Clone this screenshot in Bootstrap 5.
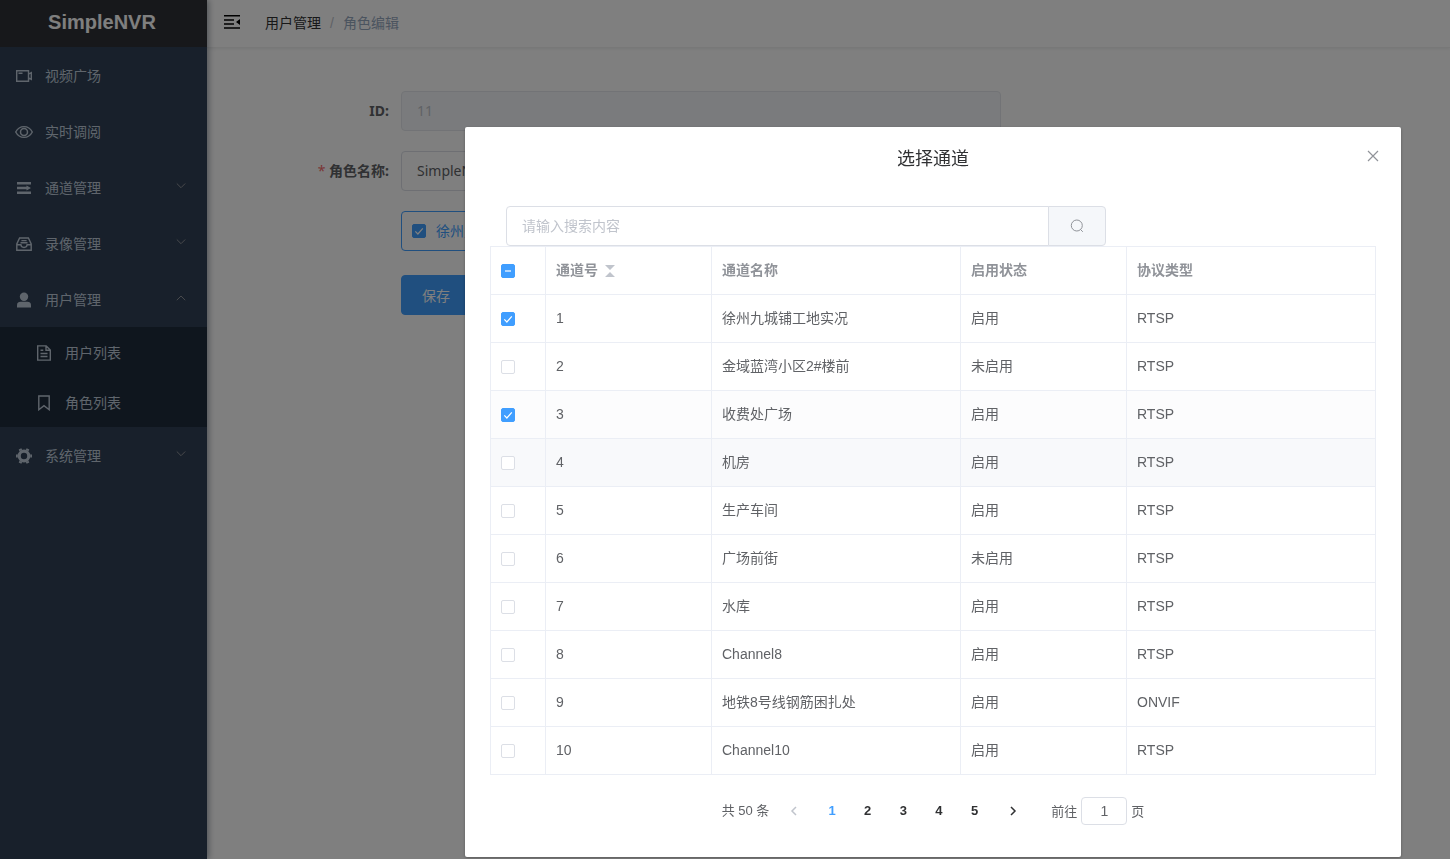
<!DOCTYPE html>
<html lang="zh-CN">
<head>
<meta charset="utf-8">
<meta name="viewport" content="width=device-width, initial-scale=1">
<title>SimpleNVR</title>
<link href="https://cdn.jsdelivr.net/npm/bootstrap@5.3.0/dist/css/bootstrap.min.css" rel="stylesheet">
<style>
:root{--ui:"Liberation Sans","Noto Sans CJK SC",sans-serif;--form:"Noto Sans","Noto Sans CJK SC",sans-serif;--blue:#409eff;--line:#ebeef5;--edge:#dcdfe6}
body{font-family:var(--ui);font-size:14px;line-height:20px;color:#606266;background:#fff}
svg{display:block;flex:none}
.ico{fill:none;stroke:currentColor}
/* sidebar */
.side{width:207px;background:#304156;box-shadow:2px 0 6px rgba(0,21,41,.35);z-index:2}
.brand{height:47px;background:#2f3036;color:#fff;font-size:20px;font-weight:700;line-height:24px;padding-bottom:4px;padding-right:3px}
.side a{color:#bfcbd9;text-decoration:none;display:flex;align-items:center}
.menu-item{height:56px;padding:2px 21px 0 16px;gap:13px}
.menu-item .chev{margin-left:auto;margin-bottom:4px;color:#909399}
.submenu{background:#1f2d3d}
.submenu a{height:50px;padding:2px 20px 0 36px;gap:13px}
/* header */
.top{height:48px;padding-left:16px;border-bottom:1px solid #f0f0f0;box-shadow:0 1px 3px rgba(0,21,41,.08)}
.fold{border:0;background:none;padding:0;color:#000;margin-bottom:4px}
.breadcrumb{--bs-breadcrumb-item-padding-x:9px;--bs-breadcrumb-divider-color:#c0c4cc;padding-bottom:2px}
.breadcrumb a{color:#303133;text-decoration:none}
.breadcrumb-item.active{color:#97a8be}
/* role form */
.role-form{padding:43px 20px 0 0;font-family:var(--form)}
.f-row{display:flex;align-items:center;margin-bottom:20px}
.f-label{width:194px;padding-right:12px;text-align:right;font-weight:700;flex:none}
.f-label .req{color:#f56c6c;font-weight:400}
.f-field{width:600px;max-width:100%}
.form-control{height:40px;font-size:14px;padding:0 15px 1px;border-color:var(--edge);color:#606266;border-radius:4px}
.form-control:disabled{background:#f5f7fa;border-color:#e4e7ed;color:#c0c4cc}
.form-control::placeholder{color:#c0c4cc}
.picked{height:40px;border:1px solid var(--blue);border-radius:4px;padding:0 20px 0 10px;color:var(--blue);gap:10px}
.btn-save{--bs-btn-bg:#409eff;--bs-btn-border-color:#409eff;--bs-btn-color:#fff;height:40px;padding:0 20px;font-size:14px;border-radius:4px;font-family:var(--form)}
/* tick boxes */
.form-check-input{width:14px;height:14px;margin:0;display:block;border:1px solid var(--edge);border-radius:2px!important;background-color:#fff;flex:none}
.form-check-input:checked,.form-check-input.partial{background-color:var(--blue);border-color:var(--blue);background-size:12px 12px}
.form-check-input:checked{background-image:url("data:image/svg+xml,%3Csvg xmlns='http://www.w3.org/2000/svg' viewBox='0 0 12 12'%3E%3Cpath d='M2.3 6.4 4.9 9 9.8 3.3' fill='none' stroke='%23fff' stroke-width='1.2'/%3E%3C/svg%3E")}
.form-check-input.partial{background-image:url("data:image/svg+xml,%3Csvg xmlns='http://www.w3.org/2000/svg' viewBox='0 0 12 12'%3E%3Cpath d='M3 6H9' stroke='%23b3d8ff' stroke-width='2'/%3E%3C/svg%3E")}
/* dialog */
.modal-backdrop{--bs-backdrop-opacity:.5}
.modal{padding:0 0 0 416px}
.modal-dialog{max-width:936px;margin:127px auto 2px}
.modal-content{border:0;border-radius:2px;box-shadow:0 1px 3px rgba(0,0,0,.3);color:#606266}
.modal-header{border:0;padding:20px 0 0;justify-content:center;position:relative}
.modal-title{font-size:18px;line-height:24px;color:#303133;font-weight:400}
.x-close{position:absolute;top:21px;right:20px;border:0;background:none;padding:0;color:#909399}
.modal-body{padding:35px 25px 32px}
.search{width:600px;max-width:100%;margin-left:16px}
.search .btn{width:58px;background:#f5f7fa;border:1px solid var(--edge);color:#909399;display:flex;align-items:center;justify-content:center;border-radius:4px}
.channels{table-layout:fixed;margin:0;border-color:var(--line);color:#606266;--bs-table-color:#606266;--bs-table-bg:transparent}
.channels th,.channels td{height:48px;padding:0 10px 2px;vertical-align:middle;border:1px solid var(--line)}
.channels th:first-child,.channels td:first-child{padding-bottom:0}
.channels th{color:#909399;font-weight:700}
.channels .sort{margin:2px 0 0 7px}
.channels tr.fade-row td{background:#fcfcfd}
.channels tr.over-row td{background:#f8f9fb}
.pager{margin-top:22px;font-size:13px;line-height:28px;height:28px}
.pager button{border:0;background:none;width:35px;height:28px;padding:0;color:#303133}
.pager .prev{margin-left:10px;padding-left:10px;color:#c0c4cc}
.pager .next{padding-left:16px}
.pages{width:178px;display:flex;list-style:none;margin:0;padding:0;font-weight:700}
.pages li{flex:1;text-align:center}
.pages a{display:block;color:#303133;text-decoration:none}
.pages a.on{color:var(--blue)}
.jump{margin-left:24px;line-height:30px}
.jump input{width:46px;height:28px;padding:0 3px;margin:0 4px;text-align:center}
</style>
</head>
<body class="overflow-hidden">
<div class="d-flex min-vh-100">
  <nav class="side flex-shrink-0 position-relative">
    <div class="brand d-flex align-items-center justify-content-center">SimpleNVR</div>
    <a class="menu-item" href="#"><svg class="ico" width="16" height="16" viewBox="0 0 16 16"><path d="M.7 2.700h11.800v10.600H.7zM2.500 5.200h4M12.500 6.200l2.800-1.600v6.800l-2.800-1.600" stroke-width="1.400"/></svg>视频广场</a>
    <a class="menu-item" href="#"><svg class="ico mx-n1" width="16" height="16" viewBox="1 0 16 16" overflow="visible"><path d="M.7 8C4.500.8 13.500.8 17.300 8 13.500 15.200 4.500 15.200.7 8z" stroke-width="1.400"/><circle cx="9" cy="8" r="3.500" stroke-width="1.500"/></svg>实时调阅</a>
    <a class="menu-item" href="#"><svg width="16" height="16" viewBox="0 0 16 16" fill="currentColor"><path d="M1 2h14v2.600H1zM1 11.400h14V14H1zM1 6.700h9.500V5.400L15 8l-4.500 2.600V9.300H1z"/></svg>通道管理<svg class="ico chev" width="10" height="10" viewBox="0 0 10 10"><path d="m.8 2.500 4.200 4.200 4.200-4.200"/></svg></a>
    <a class="menu-item" href="#"><svg class="ico" width="16" height="16" viewBox="0 0 16 16" stroke-width="1.400"><path d="M.8 14.300V8L3.600 2h8.800l2.800 6v6.300zM.8 8.800h4.100c.3 3.500 5.900 3.500 6.200 0h4.100M5.400 4.600h5.200M4.500 6.800h7"/></svg>录像管理<svg class="ico chev" width="10" height="10" viewBox="0 0 10 10"><path d="m.8 2.500 4.200 4.200 4.200-4.200"/></svg></a>
    <a class="menu-item" href="#"><svg width="16" height="16" viewBox="0 0 16 16" fill="currentColor"><circle cx="8" cy="4.800" r="4.200"/><path d="M1 15.400v-2.200C1 10.800 2.600 9.800 4.600 9.800h6.800c2 0 3.600 1 3.600 3.400v2.200z"/></svg>用户管理<svg class="ico chev" width="10" height="10" viewBox="0 0 10 10"><path d="M.8 7.200 5 3l4.200 4.200"/></svg></a>
    <div class="submenu">
      <a href="#"><svg class="ico" width="16" height="16" viewBox="0 0 16 16" stroke-width="1.400"><path d="M1.700.9h8.500l4.100 4.200v10H1.700zM10 1v4.300h4.200M4.500 5.300h2.800M4.500 8.500h7M4.500 11.500h7"/></svg>用户列表</a>
      <a href="#"><svg class="ico" width="16" height="16" viewBox="0 0 16 16" stroke-width="1.400"><path d="M2.800 1h10.400v13.700L8 10.700l-5.200 4z"/></svg>角色列表</a>
    </div>
    <a class="menu-item" href="#"><svg width="16" height="16" viewBox="0 0 16 16" fill="none" stroke="currentColor"><circle cx="8" cy="8" r="4.800" stroke-width="3.200"/><path d="M4.900 2.600 4 .9M11.100 2.600l.9-1.700M4.900 13.400 4 15.100M11.100 13.400l.9 1.700M1.800 8H0M14.200 8H16" stroke-width="3"/></svg>系统管理<svg class="ico chev" width="10" height="10" viewBox="0 0 10 10"><path d="m.8 2.500 4.200 4.200 4.200-4.200"/></svg></a>
  </nav>
  <main class="flex-grow-1">
    <header class="top d-flex align-items-center">
      <button class="fold" type="button" aria-label="折叠菜单"><svg width="18" height="16" viewBox="0 0 18 16" fill="currentColor"><path d="M1 1h16v1.600H1zM1 5.200h10v1.500H1zM1 9.200h10v1.500H1zM1 13.200h16v1.500H1zM17 5v6l-4-3z"/></svg></button>
      <ol class="breadcrumb mb-0 ms-4">
        <li class="breadcrumb-item"><a href="#">用户管理</a></li>
        <li class="breadcrumb-item active">角色编辑</li>
      </ol>
    </header>
    <form class="role-form">
      <div class="f-row"><label class="f-label" for="rid">ID:</label><div class="f-field"><input class="form-control" id="rid" value="11" disabled></div></div>
      <div class="f-row"><label class="f-label" for="rname"><span class="req">*</span> 角色名称:</label><div class="f-field"><input class="form-control" id="rname" value="SimpleNVR"></div></div>
      <div class="f-row mb-4"><span class="f-label"></span><label class="picked d-inline-flex align-items-center"><input class="form-check-input" type="checkbox" checked>徐州九城铺工地实况</label></div>
      <div class="f-row"><span class="f-label"></span><button class="btn btn-save" type="button">保存</button></div>
    </form>
  </main>
</div>

<div class="modal-backdrop show"></div>
<div class="modal d-block" role="dialog" aria-labelledby="dlg">
  <div class="modal-dialog">
    <div class="modal-content">
      <div class="modal-header">
        <h5 class="modal-title" id="dlg">选择通道</h5>
        <button class="x-close" type="button" aria-label="关闭"><svg class="ico" width="16" height="16" viewBox="0 0 16 16"><path d="m3 3 10 10M13 3 3 13" stroke-width="1.200"/></svg></button>
      </div>
      <div class="modal-body">
        <div class="input-group search">
          <input class="form-control" placeholder="请输入搜索内容" aria-label="搜索">
          <button class="btn" type="button" aria-label="搜索"><svg class="ico" width="16" height="16" viewBox="0 0 16 16"><circle cx="7.800" cy="7.500" r="5.500"/><path d="m11.500 11.500 2.300 2.300"/></svg></button>
        </div>
        <table class="table channels">
          <colgroup><col style="width:55px"><col style="width:166px"><col style="width:249px"><col style="width:166px"><col></colgroup>
          <thead><tr><th><input class="form-check-input partial" type="checkbox" aria-label="全选"></th><th><span class="d-flex align-items-center">通道号<svg class="sort" width="10" height="14" viewBox="0 0 10 14" fill="#c0c4cc"><path d="M0 1h10L5 6zM0 13h10L5 8z"/></svg></span></th><th>通道名称</th><th>启用状态</th><th>协议类型</th></tr></thead>
          <tbody>
            <tr><td><input class="form-check-input" type="checkbox" aria-label="1" checked></td><td>1</td><td>徐州九城铺工地实况</td><td>启用</td><td>RTSP</td></tr>
            <tr><td><input class="form-check-input" type="checkbox" aria-label="2"></td><td>2</td><td>金域蓝湾小区2#楼前</td><td>未启用</td><td>RTSP</td></tr>
            <tr class="fade-row"><td><input class="form-check-input" type="checkbox" aria-label="3" checked></td><td>3</td><td>收费处广场</td><td>启用</td><td>RTSP</td></tr>
            <tr class="over-row"><td><input class="form-check-input" type="checkbox" aria-label="4"></td><td>4</td><td>机房</td><td>启用</td><td>RTSP</td></tr>
            <tr><td><input class="form-check-input" type="checkbox" aria-label="5"></td><td>5</td><td>生产车间</td><td>启用</td><td>RTSP</td></tr>
            <tr><td><input class="form-check-input" type="checkbox" aria-label="6"></td><td>6</td><td>广场前街</td><td>未启用</td><td>RTSP</td></tr>
            <tr><td><input class="form-check-input" type="checkbox" aria-label="7"></td><td>7</td><td>水库</td><td>启用</td><td>RTSP</td></tr>
            <tr><td><input class="form-check-input" type="checkbox" aria-label="8"></td><td>8</td><td>Channel8</td><td>启用</td><td>RTSP</td></tr>
            <tr><td><input class="form-check-input" type="checkbox" aria-label="9"></td><td>9</td><td>地铁8号线钢筋困扎处</td><td>启用</td><td>ONVIF</td></tr>
            <tr><td><input class="form-check-input" type="checkbox" aria-label="10"></td><td>10</td><td>Channel10</td><td>启用</td><td>RTSP</td></tr>
          </tbody>
        </table>
        <div class="pager d-flex justify-content-center">
          <span>共 50 条</span>
          <button class="prev" type="button" aria-label="上一页"><svg class="ico" width="10" height="12" viewBox="0 0 10 12" stroke-width="1.500"><path d="M7 2 3 6l4 4"/></svg></button>
          <ul class="pages"><li><a class="on" href="#">1</a></li><li><a href="#">2</a></li><li><a href="#">3</a></li><li><a href="#">4</a></li><li><a href="#">5</a></li></ul>
          <button class="next" type="button" aria-label="下一页"><svg class="ico" width="10" height="12" viewBox="0 0 10 12" stroke-width="1.500"><path d="m3 2 4 4-4 4"/></svg></button>
          <label class="jump d-flex">前往<input class="form-control" value="1">页</label>
        </div>
      </div>
    </div>
  </div>
</div>
<script src="https://cdn.jsdelivr.net/npm/bootstrap@5.3.0/dist/js/bootstrap.bundle.min.js"></script>
</body>
</html>
